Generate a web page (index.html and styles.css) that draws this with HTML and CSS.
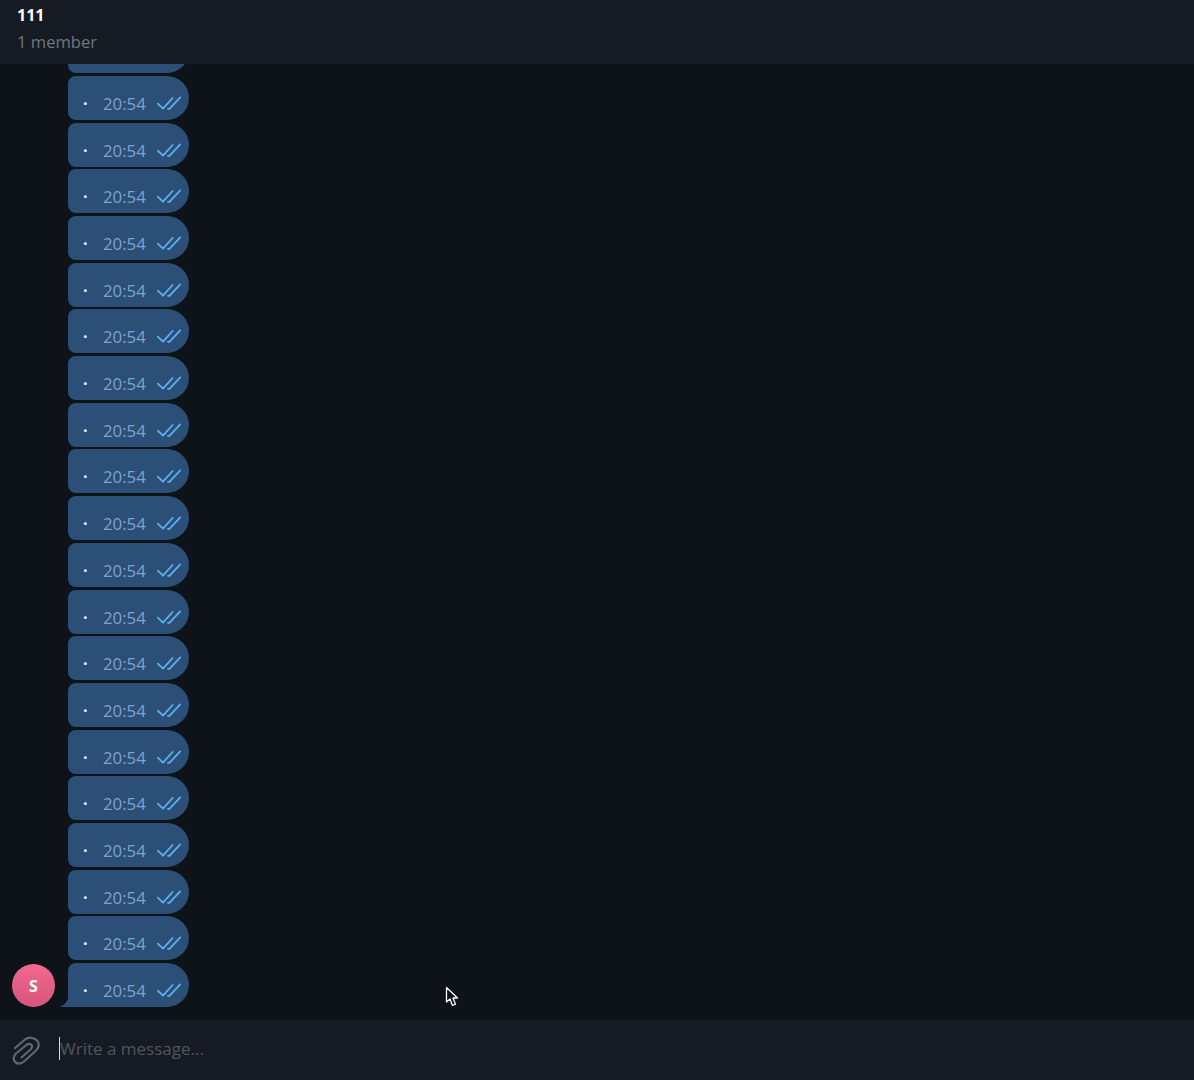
FILE: index.html
```html
<!DOCTYPE html>
<html lang="en">
<head>
  <meta charset="UTF-8" />
  <title>111</title>
  <link rel="stylesheet" href="styles.css">
</head>
<body>
  <svg class="defs" width="0" height="0">
    <symbol id="checks" viewBox="0 0 24 14">
      <path d="M0.8 7.6 L6 12.6 L15.6 2 M11 12.8 L12.4 12.8 L23.2 1.4" fill="none" stroke="currentColor" stroke-width="1.8" stroke-linecap="round" stroke-linejoin="round"/>
    </symbol>
  </svg>

  <header class="top">
    <div class="title">111</div>
    <div class="sub">1 member</div>
  </header>

  <main class="chat">
    <div class="list">
      <div class="bubble"></div>
      <div class="bubble"><span class="dot">·</span><span class="time">20:54</span><svg class="check"><use href="#checks"/></svg></div>
      <div class="bubble"><span class="dot">·</span><span class="time">20:54</span><svg class="check"><use href="#checks"/></svg></div>
      <div class="bubble"><span class="dot">·</span><span class="time">20:54</span><svg class="check"><use href="#checks"/></svg></div>
      <div class="bubble"><span class="dot">·</span><span class="time">20:54</span><svg class="check"><use href="#checks"/></svg></div>
      <div class="bubble"><span class="dot">·</span><span class="time">20:54</span><svg class="check"><use href="#checks"/></svg></div>
      <div class="bubble"><span class="dot">·</span><span class="time">20:54</span><svg class="check"><use href="#checks"/></svg></div>
      <div class="bubble"><span class="dot">·</span><span class="time">20:54</span><svg class="check"><use href="#checks"/></svg></div>
      <div class="bubble"><span class="dot">·</span><span class="time">20:54</span><svg class="check"><use href="#checks"/></svg></div>
      <div class="bubble"><span class="dot">·</span><span class="time">20:54</span><svg class="check"><use href="#checks"/></svg></div>
      <div class="bubble"><span class="dot">·</span><span class="time">20:54</span><svg class="check"><use href="#checks"/></svg></div>
      <div class="bubble"><span class="dot">·</span><span class="time">20:54</span><svg class="check"><use href="#checks"/></svg></div>
      <div class="bubble"><span class="dot">·</span><span class="time">20:54</span><svg class="check"><use href="#checks"/></svg></div>
      <div class="bubble"><span class="dot">·</span><span class="time">20:54</span><svg class="check"><use href="#checks"/></svg></div>
      <div class="bubble"><span class="dot">·</span><span class="time">20:54</span><svg class="check"><use href="#checks"/></svg></div>
      <div class="bubble"><span class="dot">·</span><span class="time">20:54</span><svg class="check"><use href="#checks"/></svg></div>
      <div class="bubble"><span class="dot">·</span><span class="time">20:54</span><svg class="check"><use href="#checks"/></svg></div>
      <div class="bubble"><span class="dot">·</span><span class="time">20:54</span><svg class="check"><use href="#checks"/></svg></div>
      <div class="bubble"><span class="dot">·</span><span class="time">20:54</span><svg class="check"><use href="#checks"/></svg></div>
      <div class="bubble"><span class="dot">·</span><span class="time">20:54</span><svg class="check"><use href="#checks"/></svg></div>
      <div class="bubble last">
        <svg class="tail" width="9" height="14" viewBox="0 0 9 14"><path d="M9 0 C9 6 6 11 0 14 L9 14 Z" fill="#2b4f77"/></svg>
        <div class="avatar">S</div>
        <span class="dot">·</span><span class="time">20:54</span><svg class="check"><use href="#checks"/></svg>
      </div>
    </div>
    <svg class="cursor" width="14" height="22" viewBox="0 0 14 22">
      <path d="M1.5 1.5 L1.5 16 L5 13 L7.5 19.5 L10.5 18.2 L8 12 L12.5 12 Z" fill="#0b0e12" stroke="#fff" stroke-width="1.3" stroke-linejoin="round"/>
    </svg>
  </main>

  <footer class="composer">
    <svg class="clip" width="28" height="30" viewBox="0 0 28 30">
      <path d="M3 13 L13 4.5 C17 1.5 23 2.5 25.5 6 C27.5 9 27 12.5 24 15.5 L12 26.5 C9 29 5 29.5 2.8 26.5 C1 24 1.5 21 4 18.5 L15 9.5 C16.5 8.5 18.5 8.5 19.5 10 C20.5 11.5 20 13 18.5 14.5 L9.5 22.5" fill="none" stroke="#5f666d" stroke-width="2.2" stroke-linecap="round" stroke-linejoin="round"/>
    </svg>
    <div class="input"><span class="caret"></span><span class="placeholder">Write a message...</span></div>
  </footer>
</body>
</html>
```
FILE: styles.css
```css
html, body {
  margin: 0;
  height: 100%;
}
body {
  display: flex;
  flex-direction: column;
  height: 1080px;
  overflow: hidden;
  font-family: "Open Sans", sans-serif;
  background: #0d1319;
}
.defs {
  position: absolute;
}
.top {
  height: 64px;
  flex: none;
  box-sizing: border-box;
  padding: 4px 17px 0;
  background: #161b23;
}
.title {
  font-size: 16px;
  font-weight: 700;
  line-height: 23px;
  color: #fff;
}
.sub {
  margin-top: 3px;
  font-size: 16.6px;
  line-height: 23px;
  color: #6f767e;
}
.chat {
  position: relative;
  flex: 1;
  min-height: 0;
  display: flex;
  flex-direction: column;
  justify-content: flex-end;
  overflow: hidden;
  padding: 0 0 13px 68px;
}
.list {
  display: flex;
  flex-direction: column;
  gap: 2.7px;
}
.bubble {
  position: relative;
  flex: none;
  display: flex;
  align-items: flex-end;
  box-sizing: border-box;
  width: 121px;
  height: 44px;
  padding: 0 8px 5px 15px;
  border-radius: 8px 22px 22px 8px;
  background: #2b4f77;
}
.bubble.last {
  border-bottom-left-radius: 0;
}
.tail {
  position: absolute;
  left: -8px;
  bottom: 0;
}
.avatar {
  position: absolute;
  left: -56px;
  bottom: 0;
  width: 43px;
  height: 43px;
  display: flex;
  align-items: center;
  justify-content: center;
  border-radius: 50%;
  background: linear-gradient(#f2698f, #d6557a);
  color: #fff;
  font-size: 16px;
  font-weight: 700;
}
.dot {
  width: 20px;
  font-size: 16px;
  line-height: 23px;
  font-weight: 700;
  color: #e8f0f8;
}
.time {
  font-size: 16.8px;
  line-height: 22px;
  color: #7fa3cc;
}
.check {
  width: 24px;
  height: 14px;
  margin: 0 0 5px 11px;
  color: #5cb0f2;
}
.cursor {
  position: absolute;
  left: 445px;
  top: 922px;
}
.composer {
  flex: none;
  box-sizing: border-box;
  height: 60px;
  display: flex;
  align-items: center;
  padding: 0 0 4px 12px;
  background: #161b23;
}
.clip {
  flex: none;
  margin-top: 3px;
}
.input {
  display: flex;
  align-items: center;
  margin-left: 19px;
}
.caret {
  width: 1px;
  height: 23px;
  background: #d8dce0;
}
.placeholder {
  font-size: 17px;
  color: #50565d;
}
```
